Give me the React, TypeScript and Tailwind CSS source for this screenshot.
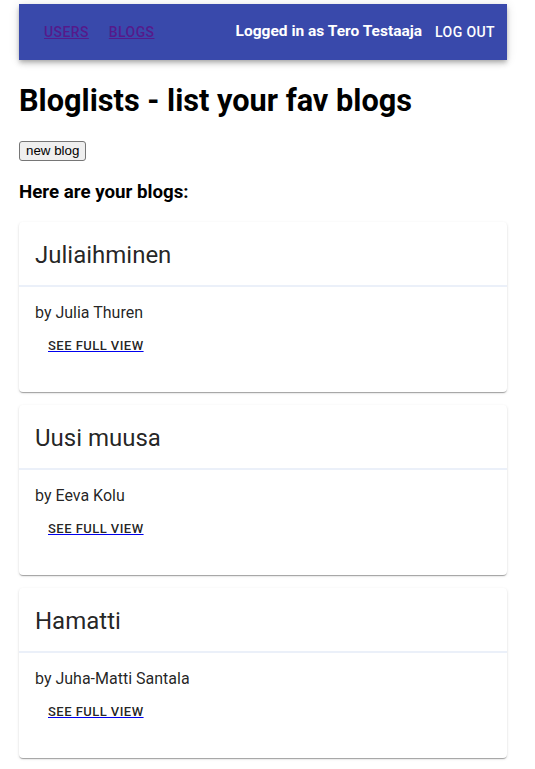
const blogs = [
  { title: "Juliaihminen", author: "Julia Thuren" },
  { title: "Uusi muusa", author: "Eeva Kolu" },
  { title: "Hamatti", author: "Juha-Matti Santala" },
];

export default function App() {
  return (
    <div className="ml-[19px] w-[488px] font-['Roboto',sans-serif] text-black">
      <header className="mt-[4px] flex h-[56px] items-center bg-[#3949ab] pl-[25px] pr-[12px] text-white shadow-[0px_2px_4px_-1px_rgba(0,0,0,0.2),0px_4px_5px_0px_rgba(0,0,0,0.14),0px_1px_10px_0px_rgba(0,0,0,0.12)]">
        <nav className="flex items-center gap-[20px] text-[14px] font-medium uppercase tracking-[0.4px]">
          <a href="#" className="text-[#551a8b] underline">users</a>
          <a href="#" className="text-[#551a8b] underline">blogs</a>
        </nav>
        <div className="ml-auto flex items-center gap-[13px]">
          <span className="text-[15.5px] font-bold">Logged in as Tero Testaaja</span>
          <button className="text-[14px] font-medium uppercase tracking-[0.4px]">log out</button>
        </div>
      </header>

      <h1 className="mt-[22px] mb-[18px] text-[30.7px] font-bold leading-[38px]">Bloglists - list your fav blogs</h1>

      <button className="h-[20px] rounded-[3px] border border-[#767676] bg-[#efefef] px-[6px] font-['Liberation_Sans',sans-serif] text-[13.33px] leading-[16px]">
        new blog
      </button>

      <h3 className="mt-[19px] mb-[19px] text-[18.72px] font-bold leading-[22px]">Here are your blogs:</h3>

      {blogs.map((blog) => (
        <div
          key={blog.title}
          className="mb-[13px] h-[170px] rounded-[4px] bg-white text-[rgba(0,0,0,0.87)] shadow-[0px_2px_1px_-1px_rgba(0,0,0,0.2),0px_1px_1px_0px_rgba(0,0,0,0.14),0px_1px_3px_0px_rgba(0,0,0,0.12)]"
        >
          <div className="border-b-2 border-[#ebf0f9] px-[16px] pt-[17px] pb-[14px] text-[24px] leading-[32px]">
            {blog.title}
          </div>
          <div className="px-[16px] pt-[14px]">
            <p className="text-[16px] leading-[24px]">by {blog.author}</p>
            <a
              href="#"
              className="ml-[13px] mt-[10px] inline-block text-[13px] font-medium uppercase leading-[22px] tracking-[0.46px] underline decoration-[#0000ee]"
            >
              see full view
            </a>
          </div>
        </div>
      ))}
    </div>
  );
}
